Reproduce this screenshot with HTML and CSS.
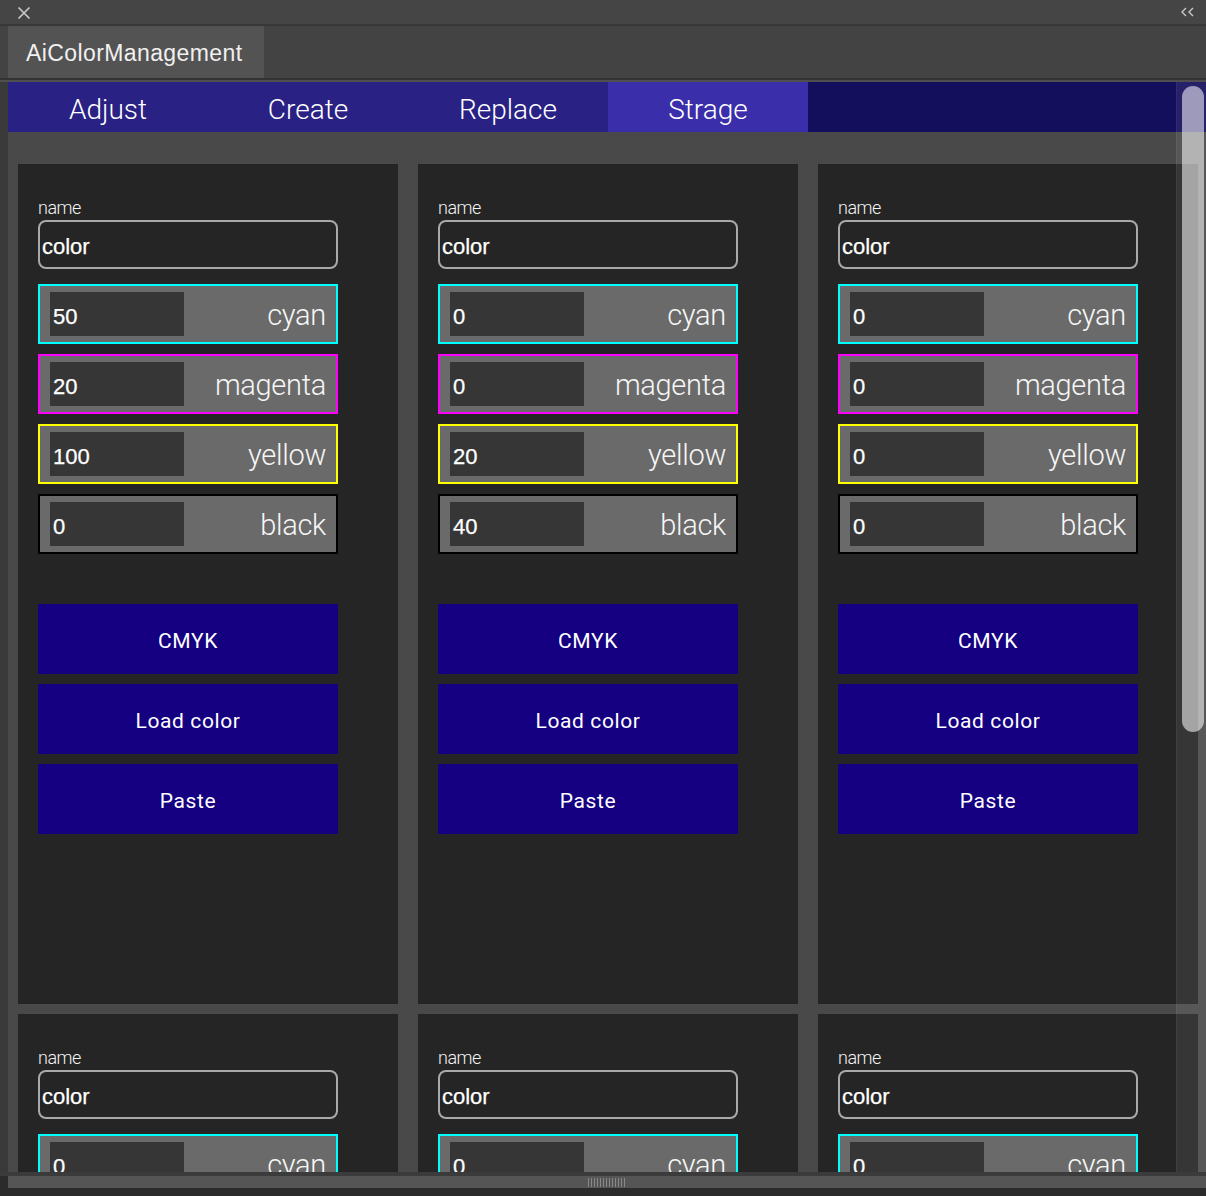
FILE: index.html
```html
<!DOCTYPE html>
<html>
<head>
<meta charset="utf-8">
<link rel="stylesheet" href="styles.css">
</head>
<body>
<div class="window">
  <div class="titlebar">
    <svg class="close" width="14" height="14" viewBox="0 0 14 14"><path d="M1.5 1.5L12.5 12.5M12.5 1.5L1.5 12.5" stroke="#c8c8c8" stroke-width="1.7" fill="none"/></svg>
    <svg class="collapse" width="16" height="12" viewBox="0 0 16 12"><path d="M6 2L2 6L6 10M13 2L9 6L13 10" stroke="#c8c8c8" stroke-width="1.4" fill="none"/></svg>
  </div>
  <div class="tabbar">
    <div class="tab">AiColorManagement</div>
  </div>
  <div class="panel">
    <nav class="nav">
      <div class="nav-item">Adjust</div>
      <div class="nav-item">Create</div>
      <div class="nav-item">Replace</div>
      <div class="nav-item active">Strage</div>
      <div class="nav-rest"></div>
    </nav>
    <div class="content">
      <div class="card">
        <div class="label">name</div>
        <div class="name-input">color</div>
        <div class="crow c-cyan"><div class="num">50</div><div class="cname">cyan</div></div>
        <div class="crow c-magenta"><div class="num">20</div><div class="cname">magenta</div></div>
        <div class="crow c-yellow"><div class="num">100</div><div class="cname">yellow</div></div>
        <div class="crow c-black"><div class="num">0</div><div class="cname">black</div></div>
        <div class="buttons">
          <div class="btn">CMYK</div>
          <div class="btn">Load color</div>
          <div class="btn">Paste</div>
        </div>
      </div>
      <div class="card">
        <div class="label">name</div>
        <div class="name-input">color</div>
        <div class="crow c-cyan"><div class="num">0</div><div class="cname">cyan</div></div>
        <div class="crow c-magenta"><div class="num">0</div><div class="cname">magenta</div></div>
        <div class="crow c-yellow"><div class="num">20</div><div class="cname">yellow</div></div>
        <div class="crow c-black"><div class="num">40</div><div class="cname">black</div></div>
        <div class="buttons">
          <div class="btn">CMYK</div>
          <div class="btn">Load color</div>
          <div class="btn">Paste</div>
        </div>
      </div>
      <div class="card">
        <div class="label">name</div>
        <div class="name-input">color</div>
        <div class="crow c-cyan"><div class="num">0</div><div class="cname">cyan</div></div>
        <div class="crow c-magenta"><div class="num">0</div><div class="cname">magenta</div></div>
        <div class="crow c-yellow"><div class="num">0</div><div class="cname">yellow</div></div>
        <div class="crow c-black"><div class="num">0</div><div class="cname">black</div></div>
        <div class="buttons">
          <div class="btn">CMYK</div>
          <div class="btn">Load color</div>
          <div class="btn">Paste</div>
        </div>
      </div>
      <div class="card">
        <div class="label">name</div>
        <div class="name-input">color</div>
        <div class="crow c-cyan"><div class="num">0</div><div class="cname">cyan</div></div>
        <div class="crow c-magenta"><div class="num">0</div><div class="cname">magenta</div></div>
        <div class="crow c-yellow"><div class="num">0</div><div class="cname">yellow</div></div>
        <div class="crow c-black"><div class="num">0</div><div class="cname">black</div></div>
      </div>
      <div class="card">
        <div class="label">name</div>
        <div class="name-input">color</div>
        <div class="crow c-cyan"><div class="num">0</div><div class="cname">cyan</div></div>
        <div class="crow c-magenta"><div class="num">0</div><div class="cname">magenta</div></div>
        <div class="crow c-yellow"><div class="num">0</div><div class="cname">yellow</div></div>
        <div class="crow c-black"><div class="num">0</div><div class="cname">black</div></div>
      </div>
      <div class="card">
        <div class="label">name</div>
        <div class="name-input">color</div>
        <div class="crow c-cyan"><div class="num">0</div><div class="cname">cyan</div></div>
        <div class="crow c-magenta"><div class="num">0</div><div class="cname">magenta</div></div>
        <div class="crow c-yellow"><div class="num">0</div><div class="cname">yellow</div></div>
        <div class="crow c-black"><div class="num">0</div><div class="cname">black</div></div>
      </div>
    </div>
    <div class="vscroll"><div class="thumb"></div></div>
  </div>
  <div class="hscroll">
    <div class="hbar"><div class="grip"></div></div>
  </div>
</div>
</body>
</html>
```
FILE: styles.css
```css
* { box-sizing: border-box; }
html, body { margin: 0; padding: 0; }
body {
  background: #3a3a3a;
  font-family: "Liberation Sans", Arial, sans-serif;
  color: #fff;
  width: 1206px;
  height: 1196px;
  overflow: hidden;
}
.window { width: 1206px; height: 1196px; display: flex; flex-direction: column; }
.titlebar {
  height: 26px;
  background: #454545;
  border-bottom: 2px solid #383838;
  display: flex;
  align-items: center;
  justify-content: space-between;
  padding: 0 10px 0 17px;
  flex: none;
}
.close { display: block; margin-top: 1px; }
.collapse { display: block; margin-top: 0; }
.tabbar {
  height: 56px;
  background: #434343;
  border-bottom: 2px solid #4f4f4f;
  box-shadow: inset 0 -2px 0 #333;
  padding-left: 8px;
  display: flex;
  flex: none;
}
.tab {
  width: 256px;
  height: 52px;
  background: #535353;
  font-size: 23px;
  letter-spacing: 0.4px;
  color: #f0f0f0;
  padding-left: 18px;
  padding-top: 2px;
  display: flex;
  align-items: center;
}
.panel {
  margin-left: 8px;
  height: 1090px;
  position: relative;
  overflow: hidden;
  background: #494949;
  flex: none;
}
.nav {
  display: flex;
  height: 50px;
  background: #140f5c;
}
.nav-item {
  width: 200px;
  background: #2a2185;
  font-family: "Roboto", "Liberation Sans", sans-serif;
  font-weight: 300;
  font-size: 28px;
  color: #fff;
  display: flex;
  align-items: center;
  justify-content: center;
  padding-top: 4px;
}
.nav-item.active { background: #3a2eab; }
.nav-rest { flex: 1; }
.content {
  display: grid;
  grid-template-columns: repeat(3, 380px);
  column-gap: 20px;
  row-gap: 10px;
  padding: 32px 0 0 10px;
}
.card {
  background: #252525;
  height: 840px;
  padding: 34px 20px 0 20px;
}
.label {
  font-family: "Roboto", "Liberation Sans", sans-serif;
  font-weight: 300;
  font-size: 18px;
  line-height: 20px;
  height: 20px;
  color: #f4f4f4;
  letter-spacing: -0.5px;
}
.name-input {
  margin-top: 2px;
  width: 300px;
  height: 49px;
  border: 2px solid #a9a9a9;
  border-radius: 8px;
  background: #252525;
  font-size: 22px;
  font-family: "Liberation Sans", Arial, sans-serif;
  -webkit-text-stroke: 0.25px #fff;
  padding-left: 2px;
  display: flex;
  align-items: center;
  padding-top: 4px;
}
.crow {
  width: 300px;
  height: 60px;
  margin-top: 15px;
  border: 2px solid #000;
  background: #6a6a6a;
  display: flex;
  align-items: center;
  justify-content: space-between;
  padding: 0 10px;
}
.crow + .crow { margin-top: 10px; }
.c-cyan { border-color: #00ffff; }
.c-magenta { border-color: #ff00ff; }
.c-yellow { border-color: #ffff00; }
.c-black { border-color: #000; }
.num {
  width: 134px;
  height: 44px;
  background: #363636;
  font-size: 22px;
  font-family: "Liberation Sans", Arial, sans-serif;
  -webkit-text-stroke: 0.25px #fff;
  padding-left: 3px;
  display: flex;
  align-items: center;
  padding-top: 6px;
}
.cname {
  font-family: "Roboto", "Liberation Sans", sans-serif;
  font-weight: 300;
  font-size: 29px;
  color: #f6f6f6;
  letter-spacing: -0.3px;
  padding-top: 2px;
}
.buttons {
  margin-top: 50px;
  display: flex;
  flex-direction: column;
  gap: 10px;
}
.btn {
  width: 300px;
  height: 70px;
  background: #140080;
  display: flex;
  align-items: center;
  justify-content: center;
  font-family: "Roboto", "Liberation Sans", sans-serif;
  font-size: 21px;
  letter-spacing: 0.6px;
  color: #fff;
  padding-top: 3px;
}
.vscroll {
  position: absolute;
  left: 1168px;
  top: 0;
  width: 30px;
  bottom: 0;
  background: rgba(255, 255, 255, 0.08);
  border-left: 1px solid rgba(255, 255, 255, 0.05);
}
.thumb {
  position: absolute;
  left: 5px;
  top: 4px;
  width: 22px;
  height: 646px;
  border-radius: 11px;
  background: rgba(255, 255, 255, 0.55);
}
.hscroll {
  height: 24px;
  background: #2b2b2b;
  flex: none;
  border-top: 4px solid #3b3b3b;
  padding-left: 8px;
}
.hbar {
  height: 12px;
  background: #555;
  position: relative;
}
.grip {
  position: absolute;
  left: 580px;
  top: 2px;
  width: 38px;
  height: 9px;
  background: repeating-linear-gradient(90deg, #888 0 1px, transparent 1px 3px);
}
```
